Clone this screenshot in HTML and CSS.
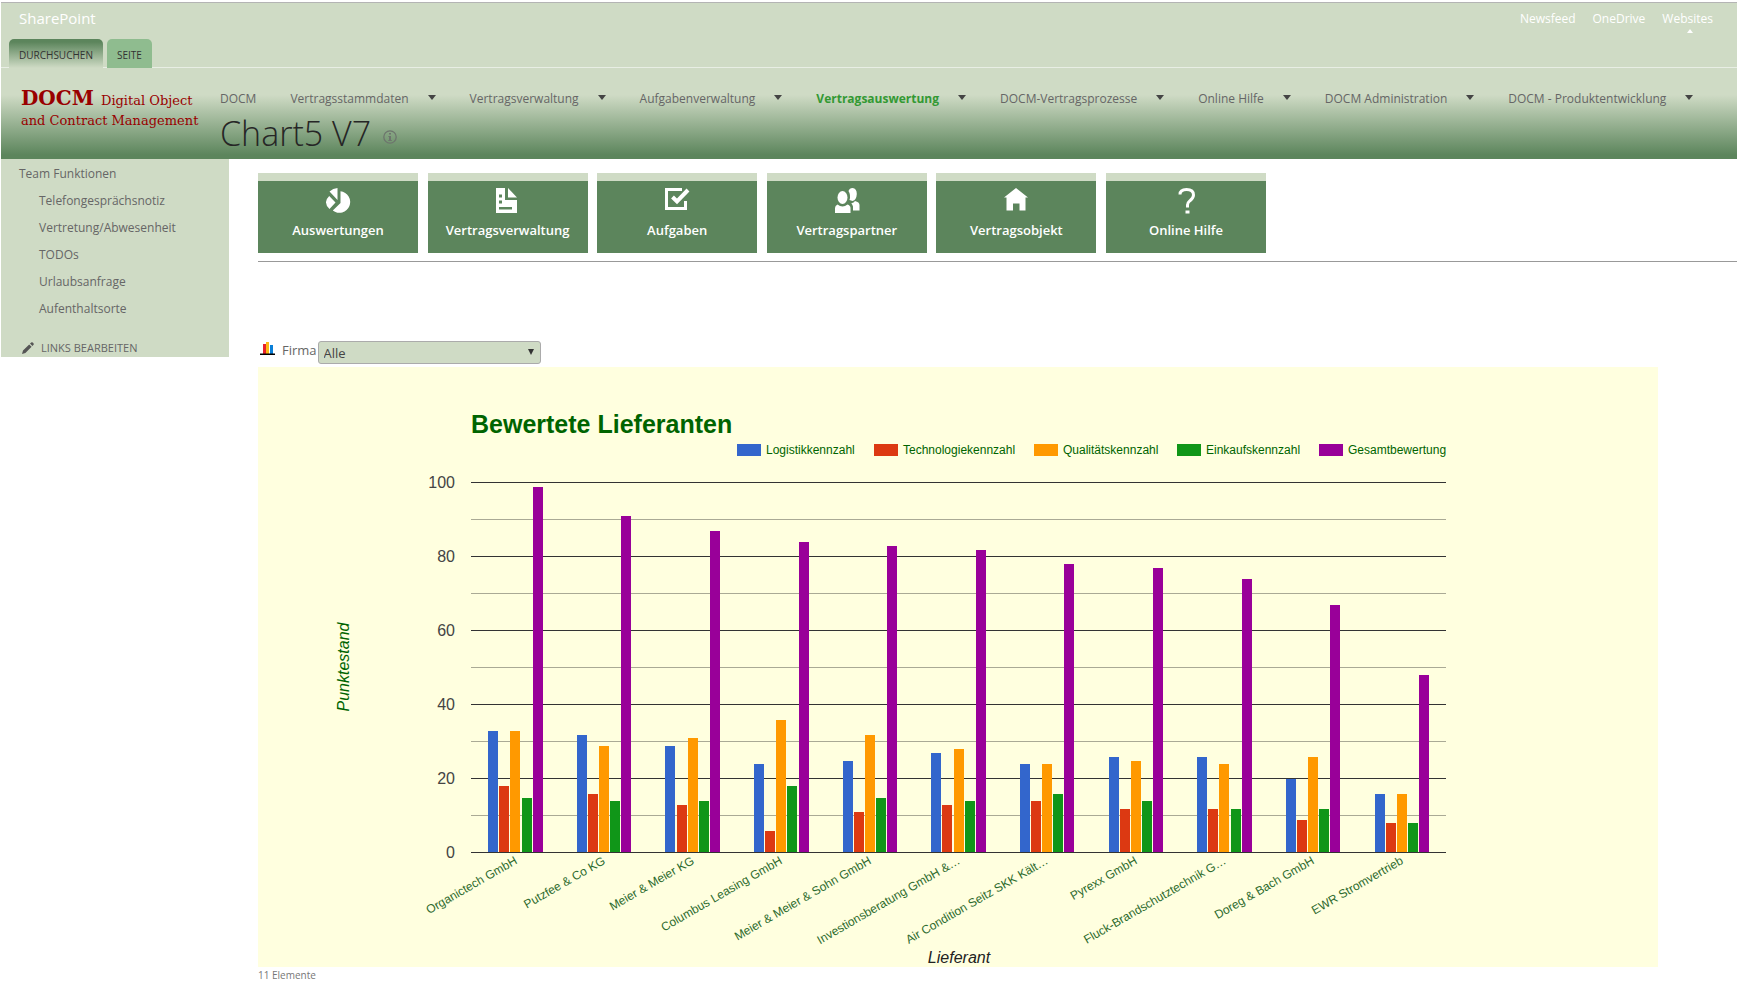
FILE: index.html
```html
<!DOCTYPE html>
<html lang="de">
<head>
<meta charset="utf-8">
<title>Chart5 V7</title>
<link rel="stylesheet" href="styles.css">
</head>
<body>
<header class="header">
  <div class="suite">
    <a class="brand" href="#">SharePoint</a>
    <nav class="suite-links">
      <a href="#">Newsfeed</a>
      <a href="#">OneDrive</a>
      <a class="current" href="#">Websites<svg class="up" width="6" height="4" viewBox="0 0 6 4"><path d="M0 4L3 0L6 4z" fill="#fff"/></svg></a>
    </nav>
  </div>
  <div class="tabs">
    <button class="tab tab-active" type="button">DURCHSUCHEN</button>
    <button class="tab" type="button">SEITE</button>
  </div>
  <div class="title-row">
    <a class="logo" href="#"><span class="logo-line"><b>DOCM</b> Digital Object</span><span class="logo-line">and Contract Management</span></a>
    <div class="heading">
      <nav class="topnav">
        <a href="#">DOCM</a>
        <a class="menu" href="#">Vertragsstammdaten</a>
        <a class="menu" href="#">Vertragsverwaltung</a>
        <a class="menu" href="#">Aufgabenverwaltung</a>
        <a class="menu selected" href="#">Vertragsauswertung</a>
        <a class="menu" href="#">DOCM-Vertragsprozesse</a>
        <a class="menu" href="#">Online Hilfe</a>
        <a class="menu" href="#">DOCM Administration</a>
        <a class="menu" href="#">DOCM - Produktentwicklung</a>
      </nav>
      <div class="page-title">
        <h1>Chart5 V7</h1>
        <svg class="info" width="14" height="14" viewBox="0 0 14 14"><circle cx="7" cy="7" r="6.2" fill="none" stroke="#6d756d" stroke-width="1.3"/><path d="M6 3h2v1.6H6zM5.4 6H8v4h.8v1H5.3v-1H6V7h-.6z" fill="#6d756d"/></svg>
      </div>
    </div>
  </div>
</header>
<div class="body">
  <aside class="sidebar">
    <nav>
      <a class="group" href="#">Team Funktionen</a>
      <a href="#">Telefongesprächsnotiz</a>
      <a href="#">Vertretung/Abwesenheit</a>
      <a href="#">TODOs</a>
      <a href="#">Urlaubsanfrage</a>
      <a href="#">Aufenthaltsorte</a>
    </nav>
    <a class="edit" href="#"><svg width="12" height="12" viewBox="0 0 12 12"><path d="M0 12L1 8.6L7.2 2.4L9.6 4.8L3.4 11zM8 1.6L9.2.4Q10-.2 10.8.6L11.4 1.2Q12.200 2 11.600 2.800L10.400 4z" fill="#555"/></svg>LINKS BEARBEITEN</a>
  </aside>
  <main class="main">
    <div class="tiles">
      <a class="tile" href="#"><svg width="26" height="26" viewBox="0 0 26 26" fill="#fff"><path d="M4.500 3.500Q8 .2 12.500 0V12zM4.200 8L10.500 14.500L4.500 21Q-2.500 14.500 4.200 8zM15.500 3.300A10.800 10.800 0 1 1 7.800 22.600L15.500 15z"/></svg>Auswertungen</a>
      <a class="tile" href="#"><svg width="26" height="26" viewBox="0 0 26 26" fill="#fff"><path fill-rule="evenodd" d="M1 0H10V12H22V25H1zM4 6.500V9.500H7V6.500zM4 12.500V15.500H7V12.500zM4 19V21.500H17V19z"/><path d="M13 0L22 9.500H13z"/></svg>Vertragsverwaltung</a>
      <a class="tile" href="#"><svg width="26" height="26" viewBox="0 0 26 26" fill="none" stroke="#fff"><path d="M18 1.500H2.500V20.500H21.500V13" stroke-width="3"/><path d="M8.500 9L13 13.500L24 2" stroke-width="4"/></svg>Aufgaben</a>
      <a class="tile" href="#"><svg width="26" height="26" viewBox="0 0 26 26" fill="#fff"><ellipse cx="8.500" cy="9.500" rx="5" ry="6.500"/><path d="M1 25V20Q1 17.500 3.500 16.500Q8.500 20.500 13.500 16.500Q16.500 17.500 16.500 20V25z"/><path d="M14.500 3Q15.500 0 18.500 0Q22.800.5 22.800 6Q22.500 12 18.500 13L15.500 12Q17 7 14.500 3zM21 13Q25.500 14 25.500 17V22.500H19V18.500Q18.500 16.500 17.300 15.300Q20 15 21 13z"/></svg>Vertragspartner</a>
      <a class="tile" href="#"><svg width="26" height="26" viewBox="0 0 26 26" fill="#fff"><path d="M13 0L25 9.500H22.500V22.500H16.500V15.500H10V22.500H3.500V9.500H1z"/></svg>Vertragsobjekt</a>
      <a class="tile" href="#"><svg width="26" height="26" viewBox="0 0 26 26"><path d="M7 6.500Q7 1.500 13.500 1.500Q20.500 1.500 20.500 7Q20.500 10 17 12.700Q14.500 14.800 14.500 17V19.500" fill="none" stroke="#fff" stroke-width="3"/><path d="M12.500 22.500h4v3h-4z" fill="#fff"/></svg>Online Hilfe</a>
    </div>
    <div class="filter">
      <svg class="bars" width="16" height="14" viewBox="0 0 16 14"><path d="M3 2h3v10H3z" fill="#e8202a"/><path d="M6 0h3v12H6z" fill="#fcb814"/><path d="M10 3h3v9h-3z" fill="#0a7fd8"/><path d="M0 11.500h15v1.500H0z" fill="#000"/></svg>
      <label for="firma">Firma</label>
      <span class="select"><select id="firma"><option>Alle</option></select><svg width="6" height="6" viewBox="0 0 6 6"><path d="M0 0h6L3 6z" fill="#333"/></svg></span>
    </div>
    <svg class="chart" id="chart" viewBox="0 0 1400 600" role="img" aria-label="Bewertete Lieferanten">
      <text class="chart-title" x="213" y="66">Bewertete Lieferanten</text>
      <text class="axis-x" x="701" y="596">Lieferant</text>
      <text class="axis-y" transform="translate(91 300) rotate(-90)">Punktestand</text>
    </svg>
    <p class="count">11 Elemente</p>
  </main>
</div>
<script src="chart.js"></script>
</body>
</html>
```
FILE: styles.css
```css
* { box-sizing: border-box; }
body {
  margin: 0;
  padding: 2px 0 0 1px;
  background: #fff;
  color: #666;
  font-family: "Open Sans", "Noto Sans", sans-serif;
  font-size: 12px;
  line-height: 17px;
}
a { color: inherit; text-decoration: none; }
svg { flex: none; }

.header {
  border-top: 1px solid #b4b4b4;
  background: linear-gradient(#cfdbc5 92px, #5c855c 152px);
}
.suite {
  display: flex;
  justify-content: space-between;
  height: 36px;
  padding: 5px 24px 0 18px;
  color: #fff;
  line-height: 20px;
}
.brand { font-size: 15px; }
.suite-links { display: flex; gap: 17px; padding-top: 1px; }
.current { position: relative; }
.up { position: absolute; left: calc(50% - 1px); bottom: 6px; }
.tabs {
  display: flex;
  gap: 4px;
  padding-left: 8px;
  border-bottom: 1px solid #e8eee4;
}
.tab {
  height: 29px;
  margin: 0 0 -1px;
  padding: 2px 10px 0;
  border: 0;
  border-radius: 5px 5px 0 0;
  background: #8fbc8f;
  color: #333;
  font: 10px "Open Sans", sans-serif;
}
.tab-active { background: linear-gradient(#5c855c 3px, #cfdbc5); }
.title-row { display: flex; height: 91px; }
.logo {
  flex: none;
  width: 219px;
  padding: 20px 0 0 20px;
  color: #900;
  font: 13px/20px "DejaVu Serif", serif;
}
.logo-line { display: block; white-space: nowrap; }
.logo b { margin-right: 3px; font-size: 20px; }
.heading { flex: 1; }
.topnav { display: flex; gap: 34px; padding-top: 22px; white-space: nowrap; }
.menu::after {
  content: "";
  display: inline-block;
  margin: 0 0 3px 19px;
  border: 4px solid transparent;
  border-top: 5px solid #444;
  border-bottom: 0;
}
.selected { color: #393; font-weight: 700; }
.page-title { display: flex; align-items: center; gap: 12px; padding-top: 8px; }
h1 { margin: 0; color: #262626; font-size: 34px; font-weight: 300; line-height: 36px; }
.info { margin-top: 8px; }

.body { display: flex; align-items: flex-start; }
.sidebar { flex: none; width: 228px; padding-top: 1px; background: #cfdbc5; }
.sidebar nav a { display: block; padding-left: 38px; line-height: 27px; }
.sidebar nav .group { padding-left: 18px; }
.edit {
  display: flex;
  align-items: center;
  gap: 7px;
  padding: 17px 0 1px 21px;
  font-size: 11px;
}
.main { flex: 1; min-width: 0; padding: 14px 0 0 29px; }
.tiles {
  display: flex;
  justify-content: space-between;
  padding: 0 calc(100% - 1008px) 8px 0;
  border-bottom: 1px solid #999;
}
.tile {
  display: flex;
  flex-direction: column;
  align-items: center;
  gap: 8px;
  width: 160px;
  height: 80px;
  padding-top: 7px;
  border-top: 8px solid #cfdbc5;
  background: #5c855c;
  color: #fff;
  font-size: 13px;
  font-weight: 600;
}
.filter {
  display: flex;
  align-items: flex-start;
  height: 26px;
  margin-top: 78px;
  padding: 1px 0 0 2px;
  font-size: 13px;
}
.filter label { margin: 1px 1px 0 6px; }
.bars { margin-top: 1px; }
.select { position: relative; }
.select svg { position: absolute; right: 7px; top: 8px; }
select {
  appearance: none;
  display: block;
  width: 223px;
  height: 23px;
  padding: 0 5px;
  border: 1px solid #ababab;
  border-radius: 3px;
  background: #cfdbc5;
  color: #444;
  font: 13px "Open Sans", sans-serif;
}
.chart {
  display: block;
  width: 100%;
  max-width: 1400px;
  margin-top: 1px;
  background: #ffffdf;
  font-family: "Liberation Sans", Arial, sans-serif;
}
.chart-title { fill: #006400; font-size: 25px; font-weight: 700; }
.axis-x { fill: #222; font-size: 16px; font-style: italic; text-anchor: middle; }
.axis-y { fill: #006400; font-size: 16px; font-style: italic; text-anchor: middle; }
.legend { fill: #006400; font-size: 12px; }
.tick { fill: #444; font-size: 16px; text-anchor: end; }
.name { fill: #2c6a2c; font-size: 12px; text-anchor: end; }
.count { margin: 0; color: #777; font-size: 10px; }
```
FILE: chart.js
```js
const NS = 'http://www.w3.org/2000/svg';
const chart = document.getElementById('chart');

function add(tag, attrs, text) {
  const el = document.createElementNS(NS, tag);
  for (const key in attrs) el.setAttribute(key, attrs[key]);
  if (text !== undefined) el.textContent = text;
  chart.appendChild(el);
}

const series = [
  ['Logistikkennzahl', '#3366cc', 479],
  ['Technologiekennzahl', '#dc3912', 616],
  ['Qualitätskennzahl', '#ff9900', 776],
  ['Einkaufskennzahl', '#109618', 919],
  ['Gesamtbewertung', '#990099', 1061]
];
const rows = [
  ['Organictech GmbH', 33, 18, 33, 15, 99],
  ['Putzfee & Co KG', 32, 16, 29, 14, 91],
  ['Meier & Meier KG', 29, 13, 31, 14, 87],
  ['Columbus Leasing GmbH', 24, 6, 36, 18, 84],
  ['Meier & Meier & Sohn GmbH', 25, 11, 32, 15, 83],
  ['Investionsberatung GmbH &…', 27, 13, 28, 14, 82],
  ['Air Condition Seitz SKK Kält…', 24, 14, 24, 16, 78],
  ['Pyrexx GmbH', 26, 12, 25, 14, 77],
  ['Fluck-Brandschutztechnik G…', 26, 12, 24, 12, 74],
  ['Doreg & Bach GmbH', 20, 9, 26, 12, 67],
  ['EWR Stromvertrieb', 16, 8, 16, 8, 48]
];
const left = 213, width = 975, base = 485, unit = 3.7;
const step = width / rows.length;

for (const [label, fill, x] of series) {
  add('rect', { x, y: 77, width: 24, height: 12, fill });
  add('text', { x: x + 29, y: 87, class: 'legend' }, label);
}
for (let v = 0; v <= 100; v += 10) {
  const y = base - v * unit;
  const major = v % 20 === 0;
  if (v > 0) add('rect', { x: left, y, width, height: 1, fill: major ? '#333' : '#aaaa95' });
  if (major) add('text', { x: 197, y: y + 6, class: 'tick' }, v);
}
rows.forEach(([name, ...values], g) => {
  values.forEach((v, b) => {
    const y = Math.round(base + 1 - v * unit);
    add('rect', {
      x: Math.round(left + 17.2 + g * step + b * 11.1),
      y, width: 10, height: base - y, fill: series[b][1]
    });
  });
  const x = Math.round(left + 46.5 + g * step);
  add('text', { transform: `translate(${x} 496) rotate(-30)`, class: 'name' }, name);
});
add('rect', { x: left, y: base, width, height: 1, fill: '#333' });
```
